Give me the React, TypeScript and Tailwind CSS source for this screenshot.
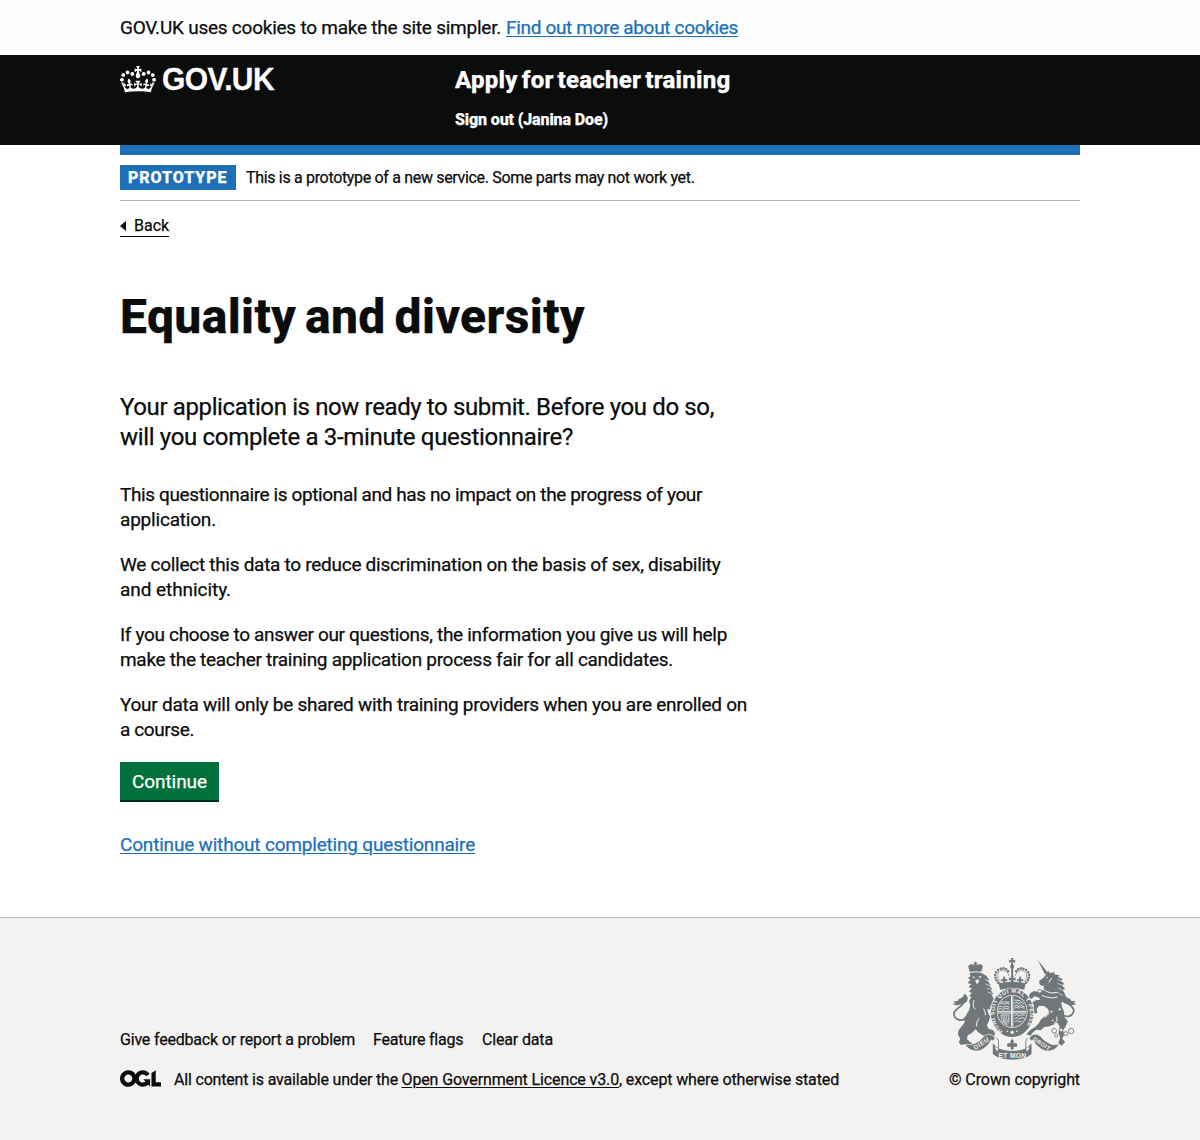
import type { ReactNode } from 'react';

const crownDots: [number, number][] = [
  [176, 98], [171, 91], [168, 83], [167, 75], [170, 67], [176, 60], [184, 56], [192, 55], [200, 58], [206, 64],
  [260, 98], [265, 91], [268, 83], [269, 75], [266, 67], [260, 60], [252, 56], [244, 55], [236, 58], [230, 64],
];

function Crown() {
  return (
    <svg className="mt-px h-[26.5px] w-9 shrink-0 fill-white" viewBox="0 0 132 97" aria-hidden="true">
      <path
        fillRule="evenodd"
        d="M25 30.2c3.5 1.5 7.7-.2 9.1-3.7 1.5-3.6-.2-7.8-3.9-9.2-3.6-1.4-7.6.3-9.1 3.9-1.4 3.5.3 7.5 3.9 9zM9 39.5c3.6 1.5 7.8-.2 9.2-3.7 1.5-3.6-.2-7.8-3.9-9.1-3.6-1.5-7.6.2-9.1 3.8-1.4 3.5.3 7.5 3.8 9zM4.4 57.2c3.5 1.5 7.7-.2 9.1-3.8 1.5-3.6-.2-7.7-3.9-9.1-3.5-1.5-7.6.3-9.1 3.8-1.4 3.5.3 7.6 3.9 9.1zm38.3-21.4c3.5 1.5 7.7-.2 9.1-3.8 1.5-3.6-.2-7.7-3.9-9.1-3.6-1.5-7.6.3-9.1 3.8-1.3 3.6.4 7.7 3.9 9.1zm64.4-5.6c-3.6 1.5-7.8-.2-9.1-3.7-1.5-3.6.2-7.8 3.8-9.2 3.6-1.4 7.7.3 9.2 3.9 1.3 3.5-.4 7.5-3.9 9zm15.9 9.3c-3.6 1.5-7.7-.2-9.1-3.7-1.5-3.6.2-7.8 3.7-9.1 3.6-1.5 7.7.2 9.2 3.8 1.5 3.5-.3 7.5-3.8 9zm4.7 17.7c-3.6 1.5-7.8-.2-9.2-3.8-1.5-3.6.2-7.7 3.9-9.1 3.6-1.5 7.7.3 9.2 3.8 1.3 3.5-.4 7.6-3.9 9.1zM89.3 35.8c-3.6 1.5-7.8-.2-9.2-3.8-1.4-3.6.2-7.7 3.9-9.1 3.6-1.5 7.7.3 9.2 3.8 1.4 3.6-.3 7.7-3.9 9.1zM69.7 17.7l8.9 4.7V9.3l-8.9 2.8c-.2-.3-.5-.6-.9-.9L72.4 0H59.6l3.5 11.2c-.3.3-.6.5-.9.9l-8.8-2.8v13.1l8.8-4.7c.3.3.6.7.9.9l-5 15.4v.1c-.2.8-.4 1.6-.4 2.4 0 4.1 3.1 7.5 7 8.1h.2c.3 0 .7.1 1 .1.4 0 .7 0 1-.1h.2c4-.6 7.1-4.1 7.1-8.1 0-.8-.1-1.7-.4-2.4V34l-5.1-15.4c.4-.2.7-.6 1-.9zM66 92.8c16.9 0 32.8 1.1 47.1 3.2 4-16.9 8.9-26.7 14-33.5l-9.6-3.4c1 4.9 1.1 7.2 0 10.2-1.5-1.4-3-4.3-4.2-8.7L108.6 76c2.8-2 5-3.2 7.5-3.3-4.4 9.4-10 11.9-13.6 11.2-4.3-.8-6.3-4.6-5.6-7.9 1-4.7 5.7-5.9 8-.5 4.3-8.7-3-11.4-7.6-8.8 7.1-7.2 7.9-13.5 2.1-21.1-8 6.1-8.1 12.3-4.5 20.8-4.7-5.4-12.1-2.5-9.5 6.2 3.4-5.2 7.9-2 7.2 3.1-.6 4.3-6.4 7.8-13.5 7.2-10.3-.9-10.9-8-11.2-13.8 2.5-.5 7.1 1.8 11 7.3L80.2 60c-4.1 4.4-8 5.3-12.3 5.4 1.4-4.4 8-11.6 8-11.6H55.5s6.4 7.2 7.9 11.6c-4.2-.1-8-1-12.3-5.4l1.4 16.4c3.9-5.5 8.5-7.7 10.9-7.3-.3 5.8-.9 12.8-11.1 13.8-7.2.6-12.9-2.9-13.5-7.2-.7-5 3.8-8.3 7.1-3.1 2.7-8.7-4.6-11.6-9.4-6.2 3.7-8.5 3.6-14.7-4.6-20.8-5.8 7.6-5 13.9 2.2 21.1-4.7-2.6-11.9.1-7.7 8.8 2.3-5.5 7.1-4.2 8.1.5.7 3.3-1.3 7.1-5.7 7.9-3.5.7-9-1.8-13.5-11.2 2.5.1 4.7 1.3 7.5 3.3l-4.7-15.4c-1.2 4.4-2.7 7.2-4.3 8.7-1.1-3-.9-5.3 0-10.2l-9.5 3.4c5 6.9 9.9 16.7 14 33.5 14.8-2.1 30.8-3.2 47.7-3.2z"
      />
    </svg>
  );
}

function OglLogo() {
  return (
    <svg className="mb-[3px] h-[17px] w-[41px] shrink-0 fill-[#0b0c0c]" viewBox="0 0 483.2 195.7" aria-label="OGL">
      <path d="M421.5 142.8V.1l-50.7 32.3v161.1h112.4v-50.7zm-122.3-9.6A47.12 47.12 0 0 1 221 97.8c0-26 21.1-47.1 47.1-47.1 16.7 0 31.4 8.7 39.7 21.8l42.7-27.2A97.63 97.63 0 0 0 268.1 0c-36.5 0-68.3 20.1-85.1 49.7A98 98 0 0 0 97.8 0C43.9 0 0 43.9 0 97.8s43.9 97.8 97.8 97.8c36.5 0 68.3-20.1 85.1-49.7a97.76 97.76 0 0 0 149.6 25.4l19.4 22.2h3v-87.8h-80l24.3 27.5zM97.8 145c-26 0-47.1-21.1-47.1-47.1s21.1-47.1 47.1-47.1 47.1 21.1 47.1 47.1S123.8 145 97.8 145" />
    </svg>
  );
}

function Fleur({ x, y, s = 1 }: { x: number; y: number; s?: number }) {
  return (
    <path
      transform={`translate(${x} ${y}) scale(${s})`}
      d="M0-12c4 4 5 8 2 13 2-5 9-5 9 1 0 4-4 5-6 2l-2 3v4h-6V7l-2-3c-2 3-6 2-6-2 0-6 7-6 9-1-3-5-2-9 2-13z"
    />
  );
}

const ribbon = 'M76 283L97 284Q120 277 134 258Q146 248 158 255L167 264L161 273L155 270Q144 293 120 302Q92 308 76 283Z';

function RoyalArms({ className }: { className: string }) {
  return (
    <svg className={className} viewBox="37.5 24 375 306" aria-hidden="true">
      <g fill="#6f777b">
        {/* crown */}
        <path d="M214 24h8l-2 7 7-2v9l-7-2 2 11h-8l2-11-7 2v-9l7 2z" />
        <circle cx="218" cy="50" r="6" />
        <path d="M215 54h6v24h-6z" />
        {crownDots.map(([x, y]) => (
          <circle key={`${x}-${y}`} cx={x} cy={y} r="3.7" />
        ))}
        <path fill="none" stroke="#6f777b" strokeWidth="2" d="M182 97c-13-18-8-36 8-36 10 0 16 8 19 17m45 19c13-18 8-36-8-36-10 0-16 8-19 17" />
        <path d="M177 100q41-9 82 0l-5 19q-36-6-72 0z" />
        <path d="m213 78 10 0-3 7 8-3v10l-7-3 3 9h-12l3-9-7 3V82l8 3z" />
        <Fleur x={194} y={89} s={0.9} />
        <Fleur x={242} y={89} s={0.9} />

        {/* lion */}
        <path d="M91 66l-3-10q-5-11 6-13 6-1 10 3v-5l-3-3h5v-3h4v3h5l-3 3v5q4-4 10-3 11 2 6 13l-3 10q-17-4-34 0z" />
        <path d="M90 70Q108 64 128 70L141 78L149 90L144 92L153 104L149 106L158 118L154 120L161 132L157 135L163 147L170 158L161 175L151 168L154 179L144 176L145 187L152 200L148 214L142 226L147 236L160 240L167 250L164 259L156 254L148 262L134 258L118 248L108 238L96 250L85 256L82 267L93 277L106 286L88 289L75 283L64 285L58 277L62 267L55 252L58 239L72 222L81 206L81 193L88 182L92 168L89 152L96 140L89 139L97 128L88 125L97 114L87 112L95 102L84 99L93 90L86 84L93 78Z" />
        <path d="M104 178L84 192L72 206L78 218L96 214L116 196Z" />
        <path fill="none" stroke="#6f777b" strokeWidth="5" strokeLinecap="round" d="M80 204c-14 12-32 6-36-8-4-12 8-18 20-28 9-8 14-16 10-25" />
        <path d="M74 131c12 5 16 21 1 29-12 6-28 7-36 3l9-4-7-5 13-1c3-7 7-7 11-9 5-3 7-6 9-13z" />

        {/* unicorn */}
        <path d="m295 30 30 38-8 6z" />
        <path d="M299 93L312 83L321 72L326 61L330 69L346 67L344 73L360 76L356 81L370 88L364 92L375 102L367 105L377 117L369 120L377 132L370 136L373 148L365 160L368 172L374 186L373 198L385 214L378 230L370 241L375 252L368 266L377 276L366 287L356 279L362 264L357 248L361 232L353 217L345 223L330 229L314 231L304 241L290 239L281 247L273 257L261 253L272 240L288 230L298 220L306 206L321 196L329 187L325 176L314 168L299 167L291 177L294 188L286 191L279 179L284 166L277 158L289 151L303 149L297 142L284 139L277 147L267 142L272 130L284 123L300 127L310 121L315 107L306 107L300 103Z" />
        <path fill="none" stroke="#6f777b" strokeWidth="5" strokeLinecap="round" d="M370 194c12 10 27 6 32-8 4-12-8-18-18-27-9-8-13-15-9-23" />
        <path d="M375 131c-12 5-15 21 0 29 12 6 26 7 36 3l-9-4 7-5-13-1c-3-7-7-7-11-9-5-3-8-6-10-13z" />
        <g fill="#f3f2f1">
          <path d="m98 79 8 2-2 5zM118 79l8-1-4 7zM107 91l10-3 2 7-7 8zM319 83l7-2-3 5z" />
        </g>
        <path fill="none" stroke="#f3f2f1" strokeWidth="3" d="m308 114 12 10 15 5 20-2m-49 9 14 5 18 3 16-3M336 84l-8 14M119 205q-10 10-8 24M104 150q-8 18 4 28m24-2q6 8 6 20M352 200q4 14-8 22M330 190l-14 12" />
        <path fill="none" stroke="#6f777b" strokeWidth="3" d="m313 108 5 9 6-10 5 14 7-12 5 13 8-11" />
        <path fill="none" stroke="#f3f2f1" strokeWidth="2" d="M146 92l-10-3m14 17-12-4m16 16-12-4m16 17-14-5M364 92l-10-4m13 17-13-5m15 20-14-6m15 22-13-7" />
        <g fill="#f3f2f1" stroke="#6f777b" strokeWidth="2.5">
          <circle cx="301" cy="124" r="5.5" />
          <circle cx="336" cy="185" r="4" />
          <circle cx="361" cy="178" r="4.5" />
          <circle cx="340" cy="212" r="3.5" />
          <circle cx="344" cy="242" r="7" />
          <circle cx="365" cy="240" r="5.5" />
          <circle cx="379" cy="251" r="6" />
          <circle cx="395" cy="243" r="8" />
          <circle cx="350" cy="257" r="5" />
        </g>

        {/* garter */}
        <ellipse cx="218" cy="188" rx="66" ry="75" fill="#f3f2f1" />
        <ellipse cx="218" cy="188" rx="64" ry="73" />
        <ellipse cx="218" cy="184" rx="46" ry="49" fill="#f3f2f1" />
        <ellipse cx="218" cy="184" rx="44" ry="47" />
        <path id="garter-line" fill="none" d="M190 243C160 226 156 168 184 141C206 123 236 124 253 143C280 170 276 226 246 243" />
        <text fill="#f3f2f1" fontFamily="Liberation Sans" fontWeight="700" fontSize="17">
          <textPath href="#garter-line" textLength="280">HONI SOIT QUI MAL Y PENSE</textPath>
        </text>
        {/* quartered shield */}
        <path fill="none" stroke="#f3f2f1" strokeWidth="3" d="M216 139v91m4-91v91M175 184h86m-86 5h86" />
        <path fill="none" stroke="#f3f2f1" strokeWidth="2.5" d="M184 156h26m-31 6 8-3 5 4 8-4 10 3m-33 9 8-3 5 4 9-4 11 4m-34 6 8-3 5 4 9-4 11 2M224 150l18 2m-18 8 9-4 4 6 6-7 10 6m-29 8 8-4 6 5 5-6 12 7m-31 4 9-4 4 4 6-4 12 4M225 197l8-3 5 4 9-4 9 2m-31 10 8-3 5 4 9-4 8 2m-29 10 8-3 5 4 8-4" />
        <path fill="none" stroke="#f3f2f1" strokeWidth="2" d="M184 195l24-1v24l-6 7-13-9zm6 0 3 22m3-22 0 24m6-24-4 25m10-16-8 19" />
        <circle cx="218" cy="247" r="5" fill="#f3f2f1" />
        <circle cx="204" cy="244" r="2.5" fill="#f3f2f1" />
        <circle cx="232" cy="244" r="2.5" fill="#f3f2f1" />

        {/* motto ribbon */}
        <path d={ribbon} stroke="#f3f2f1" strokeWidth="2" />
        <path d={ribbon} stroke="#f3f2f1" strokeWidth="2" transform="translate(436 0) scale(-1 1)" />
        <path d="M160 280q8 12 24 18 34 10 68 0 16-6 24-18v32q-10 9-25 13-33 8-66 0-15-4-25-13z" />
        <path fill="#f3f2f1" d="M166 290q0 8 8 15 0-7 4-9zm104 0q0 8-8 15 0-7-4-9z" />
        <path fill="#f3f2f1" d="M176 294V262q42 12 84 0v32q-42 12-84 0z" />
        <path fill="none" stroke="#6f777b" strokeWidth="2.5" d="M177 296v-22q0-8-6-10m88 32v-22q0-8 6-10" />
        <Fleur x={218} y={283} s={1.4} />
        <g fill="#f3f2f1" fontFamily="Liberation Sans" fontWeight="700" fontSize="20">
          <text x="177" y="324" textLength="83">ET MON</text>
          <text transform="translate(107 300) rotate(-33)" fontSize="19" textLength="51">DIEU</text>
          <text transform="translate(279 270) rotate(33)" fontSize="17" textLength="58">DROIT</text>
        </g>
      </g>
    </svg>
  );
}

function Line({ children, className }: { children: ReactNode; className: string }) {
  return <span className={`block whitespace-nowrap ${className}`}>{children}</span>;
}

export default function App() {
  return (
    <div className="flex h-[1140px] w-[1200px] flex-col bg-white font-[Roboto,sans-serif] text-[#0b0c0c] [-webkit-text-stroke:0.25px]">
      <div className="h-[55px] bg-[#fbfdfe] px-[120px] pt-[15px] text-[19px] leading-[25px] whitespace-pre">
        <span className="tracking-[-0.235px]">GOV.UK uses cookies to make the site simpler.</span>
        <a className="ml-[5px] tracking-[-0.327px] text-[#1d70b8] underline decoration-1 underline-offset-[2px]">Find out more about cookies</a>
      </div>

      <header className="flex h-[90px] bg-[#0b0c0c] px-[120px] pt-[10px] font-extrabold text-white">
        <div className="flex w-[335px] items-start gap-[6px]">
          <Crown />
          <span className="origin-bottom scale-y-105 font-['Liberation_Sans',sans-serif] text-[30px] leading-[30px] tracking-[-0.6px]">GOV.UK</span>
        </div>
        <div>
          <a className="block text-[24px] leading-[30px] tracking-[0.27px] [word-spacing:-2.4px]">Apply for teacher training</a>
          <a className="mt-[15px] block text-[16px] leading-[20px] tracking-[-0.121px]">Sign out (Janina Doe)</a>
        </div>
      </header>

      <div className="mx-[120px] h-[10px] bg-[#1d70b8]" />
      <div className="mx-[120px] flex h-[46px] items-center border-b border-[#b1b4b6]">
        <strong className="flex h-[25px] w-[116px] items-center bg-[#1d70b8] pl-2 text-[16px] font-extrabold tracking-[0.95px] text-white">PROTOTYPE</strong>
        <span className="ml-[10px] text-[16px] leading-[20px] tracking-[-0.328px] whitespace-nowrap">
          This is a prototype of a new service. Some parts may not work yet.
        </span>
      </div>

      <main className="flex flex-1 flex-col items-start px-[120px]">
        <a className="mt-[15px] flex h-[21px] items-center border-b border-[#0b0c0c] text-[16px] leading-[20px]">
          <svg className="mr-2 h-[10px] w-[6px]" viewBox="0 0 6 10">
            <path d="M0 5 6 0v10z" fill="#0b0c0c" />
          </svg>
          Back
        </a>
        <h1 className="mt-[55px] text-[48px] leading-[50px] font-extrabold tracking-[0.4px] [word-spacing:-3.5px]">Equality and diversity</h1>
        <p className="mt-[50px] text-[24px] leading-[30px]">
          <Line className="tracking-[-0.377px]">Your application is now ready to submit. Before you do so,</Line>
          <Line className="tracking-[-0.33px]">will you complete a 3-minute questionnaire?</Line>
        </p>
        <div className="mt-[30px] flex flex-col gap-5 text-[19px] leading-[25px]">
          <p>
            <Line className="tracking-[-0.38px]">This questionnaire is optional and has no impact on the progress of your</Line>
            <Line className="tracking-[-0.2px]">application.</Line>
          </p>
          <p>
            <Line className="tracking-[-0.28px]">We collect this data to reduce discrimination on the basis of sex, disability</Line>
            <Line className="tracking-[-0.065px]">and ethnicity.</Line>
          </p>
          <p>
            <Line className="tracking-[-0.327px]">If you choose to answer our questions, the information you give us will help</Line>
            <Line className="tracking-[-0.289px]">make the teacher training application process fair for all candidates.</Line>
          </p>
          <p>
            <Line className="tracking-[-0.265px]">Your data will only be shared with training providers when you are enrolled on</Line>
            <Line className="tracking-[-0.4px]">a course.</Line>
          </p>
        </div>
        <button className="mt-5 h-[38px] w-[99px] bg-[#00703c] pt-[2px] text-[19px] tracking-[-0.07px] text-white shadow-[0_2px_0_#002d18]">Continue</button>
        <a className="mt-8 text-[19px] leading-[25px] tracking-[-0.188px] text-[#1d70b8] underline decoration-1 underline-offset-[2px]">
          Continue without completing questionnaire
        </a>
      </main>

      <footer className="flex h-[223px] items-end justify-between border-t border-[#b1b4b6] bg-[#f3f2f1] px-[120px] pb-[50px] text-[16px] leading-[20px] whitespace-nowrap">
        <div>
          <div className="flex">
            <a className="w-[253px] tracking-[-0.189px]">Give feedback or report a problem</a>
            <a className="w-[109px] tracking-[-0.206px]">Feature flags</a>
            <a className="tracking-[-0.155px]">Clear data</a>
          </div>
          <div className="mt-5 flex h-5 items-center">
            <OglLogo />
            <span className="ml-[13px] w-[227.5px] tracking-[-0.183px]">All content is available under the</span>
            <a className="tracking-[-0.129px] underline decoration-1 underline-offset-[2px]">Open Government Licence v3.0</a>
            <span className="tracking-[-0.137px]">, except where otherwise stated</span>
          </div>
        </div>
        <div className="flex w-[131px] flex-col items-center">
          <RoyalArms className="h-[102px] w-[125px]" />
          <span className="mt-[10px] tracking-[-0.087px]">© Crown copyright</span>
        </div>
      </footer>
    </div>
  );
}
